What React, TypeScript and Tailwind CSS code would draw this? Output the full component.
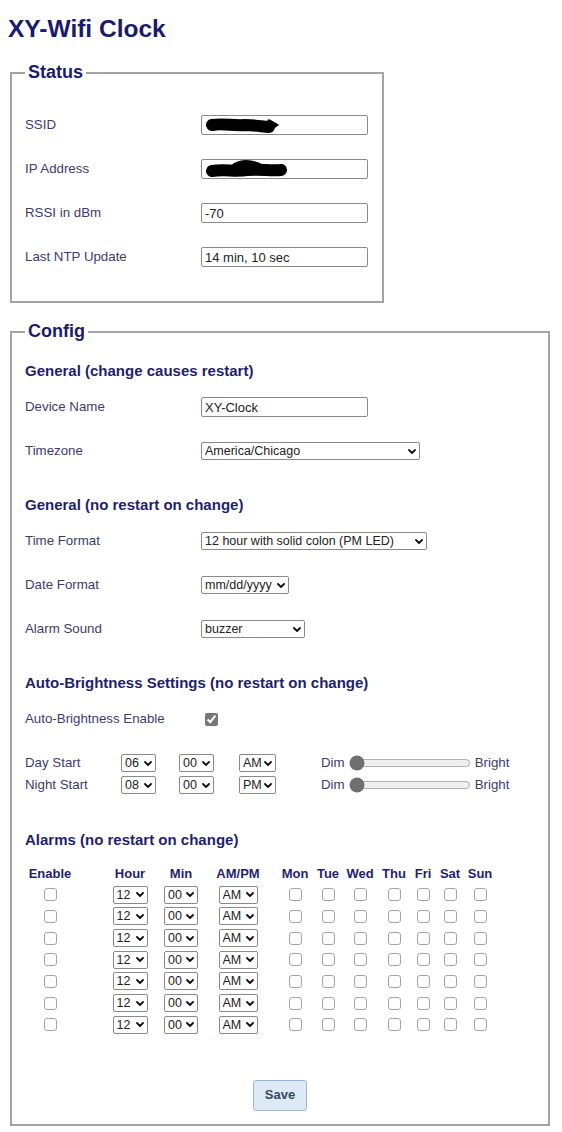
import React from "react";

const label = "w-[176px] shrink-0 text-[#3c3c6c]";
const heading = "flex h-[28px] items-center text-[15px] font-bold text-[#1f1f6e]";
const field = "h-[20px] w-[167px] rounded-[2px] border border-[#8a8a8a] bg-white px-[3px] text-[13px] text-[#222]";
const check = "h-[13px] w-[13px] appearance-none rounded-[3px] border border-[#a4a4a4] bg-white";

// alarm table columns, each centered on its header
const cols = [
  "w-[50px]",
  "ml-[35px] w-[40px]",
  "ml-[13px] w-[36px]",
  "ml-[16px] w-[46px]",
  "ml-[19px] w-[30px]",
  "ml-[6px] w-[24px]",
  "ml-[5px] w-[30px]",
  "ml-[6px] w-[26px]",
  "ml-[6px] w-[20px]",
  "ml-[5px] w-[24px]",
  "ml-[5px] w-[26px]",
];
const headers = ["Enable", "Hour", "Min", "AM/PM", "Mon", "Tue", "Wed", "Thu", "Fri", "Sat", "Sun"];
const days = ["Mon", "Tue", "Wed", "Thu", "Fri", "Sat", "Sun"];

function Select({ value, className }: { value: string; className: string }) {
  return (
    <div className={"relative inline-flex shrink-0 " + className}>
      <select
        defaultValue={value}
        className="h-[18px] w-full appearance-none rounded-[2px] border border-[#8a8a8a] bg-white pl-[3px] text-[12.5px] leading-[16px] text-[#222]"
      >
        <option>{value}</option>
      </select>
      <svg className="pointer-events-none absolute right-[4px] top-[6.5px]" width="8" height="5" viewBox="0 0 8 5">
        <path d="M1 1 L4 4 L7 1" stroke="#111" strokeWidth="1.8" fill="none" strokeLinecap="round" strokeLinejoin="round" />
      </svg>
    </div>
  );
}

function Redacted({ wide }: { wide?: boolean }) {
  return (
    <div className={field + " flex items-center"}>
      {wide ? (
        <svg width="84" height="18" viewBox="0 0 84 18">
          <path d="M7 11 C20 9 30 12 42 10 C56 9 66 11 76 10" stroke="#000" strokeWidth="12" strokeLinecap="round" fill="none" />
          <path d="M30 6 C36 2 46 2 54 6" stroke="#000" strokeWidth="6" strokeLinecap="round" fill="none" />
        </svg>
      ) : (
        <svg width="74" height="16" viewBox="0 0 74 16">
          <path d="M7 8 C18 6 28 9 40 8 C52 8 58 10 64 10" stroke="#000" strokeWidth="12" strokeLinecap="round" fill="none" />
          <path d="M64 4 L71 8 L64 13" stroke="#000" strokeWidth="3.5" strokeLinecap="round" fill="none" />
        </svg>
      )}
    </div>
  );
}

function Row({ name, children }: { name: string; children: React.ReactNode }) {
  return (
    <div className="flex h-[44px] items-center">
      <span className={label}>{name}</span>
      {children}
    </div>
  );
}

function TimeRow({ name, hour, ampm }: { name: string; hour: string; ampm: string }) {
  return (
    <div className="flex h-[22px] items-center">
      <span className="w-[96px] shrink-0 text-[#3c3c6c]">{name}</span>
      <Select value={hour} className="w-[35px]" />
      <Select value="00" className="ml-[23px] w-[35px]" />
      <Select value={ampm} className="ml-[25px] w-[37px]" />
      <span className="ml-[45px] text-[#3c3c6c]">Dim</span>
      <input type="range" min={0} max={100} defaultValue={0} className="ml-[4px] w-[122px] accent-[#6f6f6f]" />
      <span className="ml-[4px] text-[#3c3c6c]">Bright</span>
    </div>
  );
}

export default function App() {
  return (
    <div className="min-h-screen bg-white px-2 font-['Liberation_Sans',Arial,sans-serif] text-[13.3px]">
      <h1 className="mt-[15px] text-[24.5px] font-bold leading-[28px] text-[#1a1a6e]">XY-Wifi Clock</h1>

      <fieldset className="ml-[2px] mt-[19px] w-[374px] border-2 border-[#a3a3a3] pb-[22px] pl-[13px] pr-[13px] pt-[20px]">
        <legend className="px-[3px] text-[18px] font-bold leading-[21px] text-[#1a1a6e]">Status</legend>
        <Row name="SSID">
          <Redacted />
        </Row>
        <Row name="IP Address">
          <Redacted wide />
        </Row>
        <Row name="RSSI in dBm">
          <input className={field} defaultValue="-70" />
        </Row>
        <Row name="Last NTP Update">
          <input className={field} defaultValue="14 min, 10 sec" />
        </Row>
      </fieldset>

      <fieldset className="ml-[2px] mt-[18px] w-[540px] border-2 border-[#a3a3a3] pb-[13px] pl-[13px] pr-[13px] pt-[15px]">
        <legend className="px-[3px] text-[18px] font-bold leading-[21px] text-[#1a1a6e]">Config</legend>

        <div className={heading}>General (change causes restart)</div>
        <Row name="Device Name">
          <input className={field} defaultValue="XY-Clock" />
        </Row>
        <Row name="Timezone">
          <Select value="America/Chicago" className="w-[219px]" />
        </Row>

        <div className={heading + " mt-[18px]"}>General (no restart on change)</div>
        <Row name="Time Format">
          <Select value="12 hour with solid colon (PM LED)" className="w-[226px]" />
        </Row>
        <Row name="Date Format">
          <Select value="mm/dd/yyyy" className="w-[88px]" />
        </Row>
        <Row name="Alarm Sound">
          <Select value="buzzer" className="w-[104px]" />
        </Row>

        <div className={heading + " mt-[18px]"}>Auto-Brightness Settings (no restart on change)</div>
        <Row name="Auto-Brightness Enable">
          <input type="checkbox" defaultChecked className="ml-[4px] h-[13px] w-[13px] accent-[#777777]" />
        </Row>
        <div className="mt-[11px]">
          <TimeRow name="Day Start" hour="06" ampm="AM" />
          <TimeRow name="Night Start" hour="08" ampm="PM" />
        </div>

        <div className={heading + " mt-[30px]"}>Alarms (no restart on change)</div>
        <div className="mt-[10px]">
          <div className="flex h-[20px] items-center text-[13px] font-bold text-[#1f1f6e]">
            {headers.map((h, i) => (
              <div key={h} className={"flex shrink-0 justify-center " + cols[i]}>
                {h}
              </div>
            ))}
          </div>
          {[0, 1, 2, 3, 4, 5, 6].map((r) => (
            <div key={r} className="flex h-[21.67px] items-center">
              <div className={"flex shrink-0 justify-center " + cols[0]}>
                <input type="checkbox" className={check} />
              </div>
              <div className={"flex shrink-0 justify-center " + cols[1]}>
                <Select value="12" className="w-[35px]" />
              </div>
              <div className={"flex shrink-0 justify-center " + cols[2]}>
                <Select value="00" className="w-[34px]" />
              </div>
              <div className={"flex shrink-0 justify-center " + cols[3]}>
                <Select value="AM" className="w-[39px]" />
              </div>
              {days.map((d, i) => (
                <div key={d} className={"flex shrink-0 justify-center " + cols[i + 4]}>
                  <input type="checkbox" className={check} />
                </div>
              ))}
            </div>
          ))}
        </div>

        <div className="mt-[44px] flex justify-center">
          <button className="h-[31px] w-[54px] rounded-[3px] border border-[#9ab6d3] bg-[#dde9f5] text-[13px] font-bold text-[#34495e]">
            Save
          </button>
        </div>
      </fieldset>
    </div>
  );
}
